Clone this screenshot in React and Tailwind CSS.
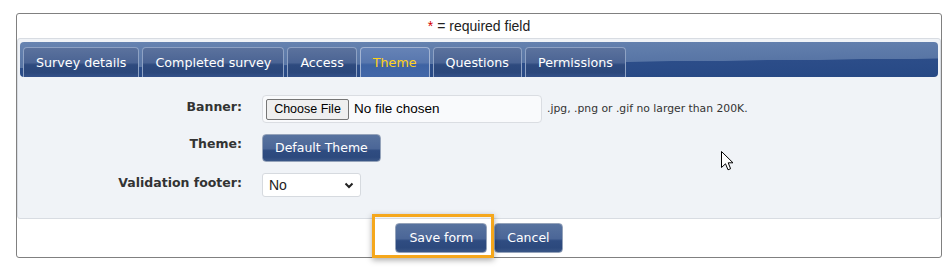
const tabs = ['Survey details', 'Completed survey', 'Access', 'Theme', 'Questions', 'Permissions']

const btn =
  'border border-[#95a3ba] rounded-[4px] text-white text-[12.5px] px-[12px] flex items-center bg-[linear-gradient(to_bottom,#58739f_0%,#4b6697_52%,#2f4c81_60%,#2c497d_85%,#3a5686_100%)]'

function Tab({ label, active }) {
  return (
    <div
      className={
        active
          ? 'h-[30px] px-[12px] rounded-t-[4px] border border-b-0 border-[#a3b4d2] flex items-center text-[12.7px] text-[#ffd21a] bg-[linear-gradient(to_bottom,#6683b6_0%,#5877ae_50%,#3e63a3_58%,#4267a8_100%)]'
          : 'h-[30px] px-[12px] rounded-t-[4px] border border-b-0 border-[#8ea2c4] flex items-center text-[12.7px] text-white bg-[linear-gradient(to_bottom,#5b729d_0%,#4b6494_50%,#2e4a7e_58%,#2b477b_85%,#34518a_100%)]'
      }
    >
      {label}
    </div>
  )
}

function Cursor() {
  return (
    <svg className="absolute left-[721px] top-[151px]" width="13" height="20" viewBox="0 0 13 20">
      <path d="M0.5 0.5V16.5L4.5 12.8L7 18.8L9.6 17.7L7.2 11.8H12Z" fill="#fff" stroke="#000" strokeWidth="1" strokeLinejoin="round" />
    </svg>
  )
}

export default function App() {
  return (
    <div className="relative w-[952px] h-[272px] bg-white pt-[13px] pl-[16px] [font-family:'DejaVu_Sans',Verdana,sans-serif] text-[#333]">
      <div className="w-[926px] h-[245px] border border-[#808080] rounded-[3px] flex flex-col">
        <div className="h-[24px] flex items-center justify-center text-[14px] text-[#222] [font-family:'Liberation_Sans',Arial,sans-serif]">
          <span className="text-[#d40000] mr-[4px]">*</span>= required field
        </div>

        <div className="border border-[#d8dce2] rounded-[3px] bg-[#f0f3f7] pt-[3px] px-[2px]">
          <div className="h-[35px] rounded-[4px] pl-[3px] flex items-end gap-[3px] bg-[linear-gradient(179.4deg,#6784b1_0%,#5875a5_58%,#2c4d89_59%,#274985_100%)]">
            {tabs.map(t => (
              <Tab key={t} label={t} active={t === 'Theme'} />
            ))}
          </div>

          <div className="pt-[18px] pb-[21px] flex flex-col gap-[11px]">
            <div className="flex items-start gap-[20px]">
              <div className="w-[222px] text-right text-[12.5px] font-bold leading-[15px] pt-[4px]">Banner:</div>
              <div className="flex items-center gap-[5px]">
                <div className="w-[280px] h-[28px] border border-[#dadde2] rounded-[4px] bg-[#f9fafc] flex items-center pl-[3px] gap-[5px] [font-family:'Liberation_Sans',Arial,sans-serif]">
                  <div className="w-[83px] h-[21px] border border-[#767676] rounded-[2px] bg-[#efefef] text-[12.5px] text-black flex items-center justify-center">
                    Choose File
                  </div>
                  <span className="text-[13.5px] text-black">No file chosen</span>
                </div>
                <span className="text-[10.8px] text-[#333]">.jpg, .png or .gif no larger than 200K.</span>
              </div>
            </div>

            <div className="flex items-start gap-[20px]">
              <div className="w-[222px] text-right text-[12.5px] font-bold leading-[15px] pt-[2px]">Theme:</div>
              <div className={btn + ' h-[28px]'}>Default Theme</div>
            </div>

            <div className="flex items-start gap-[20px]">
              <div className="w-[222px] text-right text-[12.5px] font-bold leading-[15px] pt-[2px]">Validation footer:</div>
              <div className="w-[99px] h-[24px] border border-[#d6dadf] rounded-[3px] bg-white flex items-center justify-between pl-[6px] pr-[6px] text-[14px] text-[#222] [font-family:'Liberation_Sans',Arial,sans-serif]">
                <span>No</span>
                <svg width="10" height="7" viewBox="0 0 10 7">
                  <path d="M1.5 1.5L5 5L8.5 1.5" fill="none" stroke="#222" strokeWidth="2" />
                </svg>
              </div>
            </div>
          </div>
        </div>

        <div className="flex-1 flex items-center justify-center gap-[7px]">
          <div className={btn + ' h-[30px] px-[13px]'}>Save form</div>
          <div className={btn + ' h-[30px]'}>Cancel</div>
        </div>
      </div>

      <div className="absolute left-[372px] top-[214px] w-[122px] h-[44px] border-[3px] border-[#f5a71c] shadow-[0_2px_6px_rgba(0,0,0,0.35)]" />
      <Cursor />
    </div>
  )
}
